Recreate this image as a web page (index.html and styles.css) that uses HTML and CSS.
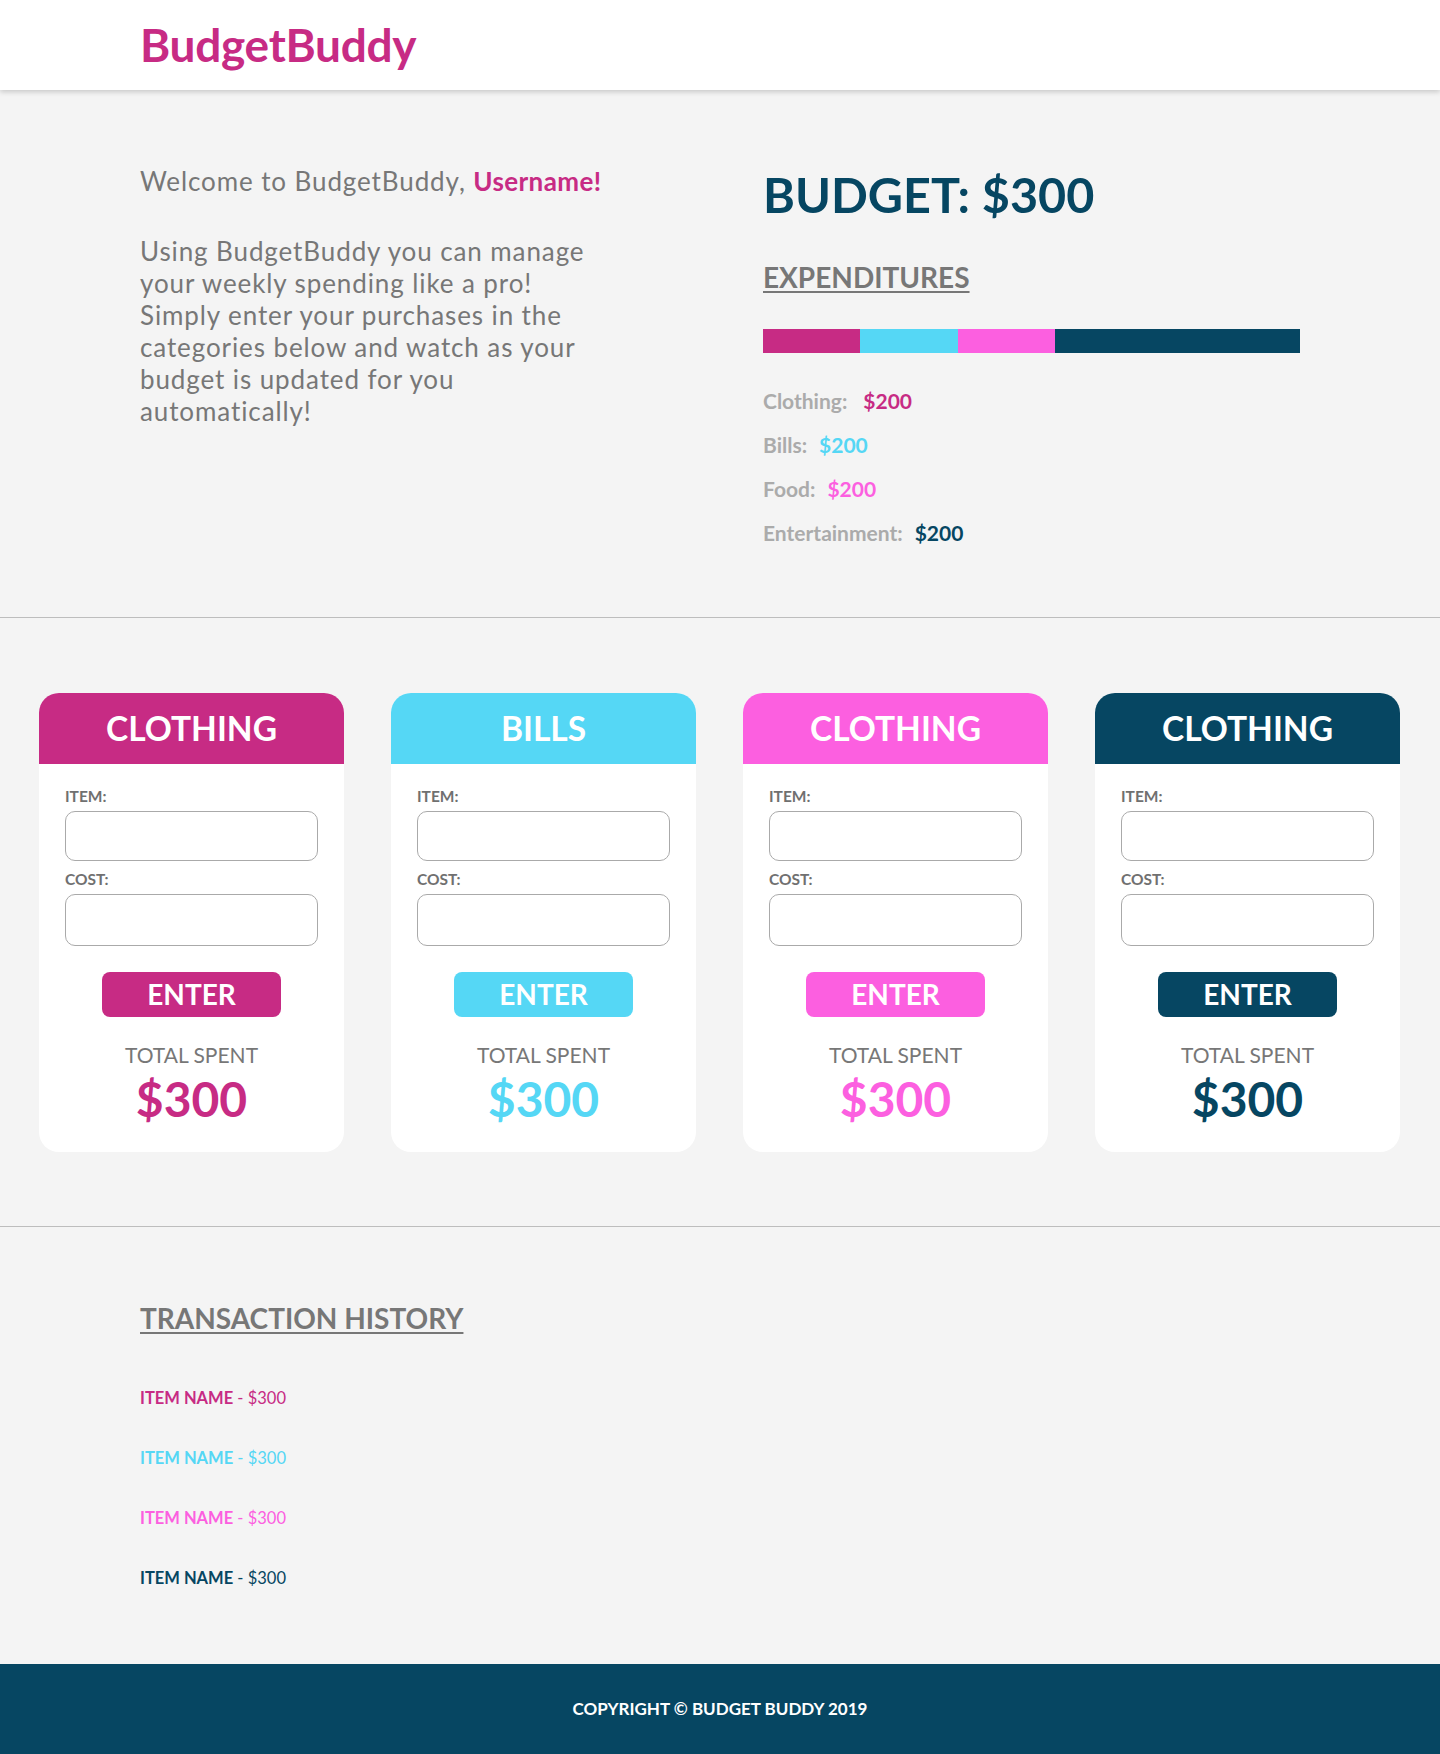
FILE: index.html
```html
<!DOCTYPE html>
<html lang="en">
<head>
<meta charset="utf-8">
<title>BudgetBuddy</title>
<link rel="stylesheet" href="styles.css">
</head>
<body>
<header class="site-header">
  <div class="logo">BudgetBuddy</div>
</header>

<section class="intro">
  <div class="intro-inner">
    <div class="intro-left">
      <p class="welcome">Welcome to BudgetBuddy, <strong class="username">Username!</strong></p>
      <p class="lead">Using BudgetBuddy you can manage your weekly spending like a pro! Simply enter your purchases in the categories below and watch as your budget is updated for you automatically!</p>
    </div>
    <div class="intro-right">
      <h1 class="budget">BUDGET: $300</h1>
      <h2 class="section-title">EXPENDITURES</h2>
      <div class="bar">
        <span class="seg c-clothing" style="width:18.15%"></span>
        <span class="seg c-bills" style="width:18.15%"></span>
        <span class="seg c-food" style="width:18.15%"></span>
        <span class="seg c-ent" style="width:45.55%"></span>
      </div>
      <ul class="legend">
        <li><span class="lg-label lg-wide">Clothing:</span><span class="lg-val t-clothing">$200</span></li>
        <li><span class="lg-label">Bills:</span><span class="lg-val t-bills">$200</span></li>
        <li><span class="lg-label">Food:</span><span class="lg-val t-food">$200</span></li>
        <li><span class="lg-label">Entertainment:</span><span class="lg-val t-ent">$200</span></li>
      </ul>
    </div>
  </div>
</section>

<section class="cards">
  <div class="card">
    <div class="card-head c-clothing">CLOTHING</div>
    <div class="card-body">
      <label class="field-label">ITEM:</label>
      <input class="field field-item" type="text">
      <label class="field-label">COST:</label>
      <input class="field field-cost" type="text">
      <button class="enter c-clothing">ENTER</button>
      <div class="total-label">TOTAL SPENT</div>
      <div class="total-val t-clothing">$300</div>
    </div>
  </div>
  <div class="card">
    <div class="card-head c-bills">BILLS</div>
    <div class="card-body">
      <label class="field-label">ITEM:</label>
      <input class="field field-item" type="text">
      <label class="field-label">COST:</label>
      <input class="field field-cost" type="text">
      <button class="enter c-bills">ENTER</button>
      <div class="total-label">TOTAL SPENT</div>
      <div class="total-val t-bills">$300</div>
    </div>
  </div>
  <div class="card">
    <div class="card-head c-food">CLOTHING</div>
    <div class="card-body">
      <label class="field-label">ITEM:</label>
      <input class="field field-item" type="text">
      <label class="field-label">COST:</label>
      <input class="field field-cost" type="text">
      <button class="enter c-food">ENTER</button>
      <div class="total-label">TOTAL SPENT</div>
      <div class="total-val t-food">$300</div>
    </div>
  </div>
  <div class="card">
    <div class="card-head c-ent">CLOTHING</div>
    <div class="card-body">
      <label class="field-label">ITEM:</label>
      <input class="field field-item" type="text">
      <label class="field-label">COST:</label>
      <input class="field field-cost" type="text">
      <button class="enter c-ent">ENTER</button>
      <div class="total-label">TOTAL SPENT</div>
      <div class="total-val t-ent">$300</div>
    </div>
  </div>
</section>

<section class="history">
  <h2 class="section-title history-title">TRANSACTION HISTORY</h2>
  <ul class="tx-list">
    <li class="t-clothing"><strong>ITEM NAME</strong> - $300</li>
    <li class="t-bills"><strong>ITEM NAME</strong> - $300</li>
    <li class="t-food"><strong>ITEM NAME</strong> - $300</li>
    <li class="t-ent"><strong>ITEM NAME</strong> - $300</li>
  </ul>
</section>

<footer class="site-footer">COPYRIGHT © BUDGET BUDDY 2019</footer>
</body>
</html>
```

FILE: styles.css
```css
* { box-sizing: border-box; }

html, body {
  margin: 0;
  padding: 0;
}

body {
  background: #f4f4f4;
  font-family: Lato, "Open Sans", "Liberation Sans", sans-serif;
  color: #777777;
}

/* colours */
.c-clothing { background: #c72b84; }
.c-bills { background: #55d7f5; }
.c-food { background: #fc5fe0; }
.c-ent { background: #064662; }
.t-clothing { color: #c72b84; }
.t-bills { color: #55d7f5; }
.t-food { color: #fc5fe0; }
.t-ent { color: #064662; }

/* header */
.site-header {
  height: 90px;
  background: #ffffff;
  box-shadow: 0 2px 5px rgba(0, 0, 0, 0.18);
  padding-left: 140px;
  position: relative;
  z-index: 1;
}

.logo {
  font-size: 46px;
  font-weight: 700;
  line-height: 90px;
  color: #c72b84;
  letter-spacing: -0.3px;
}

/* intro */
.intro {
  padding: 75px 0 72px;
  border-bottom: 1px solid #bdbdbd;
}

.intro-inner {
  width: 1160px;
  margin: 0 auto;
  display: grid;
  grid-template-columns: 480px 537px;
  justify-content: space-between;
}

.welcome {
  margin: 0;
  font-size: 26px;
  line-height: 32px;
  letter-spacing: 0.9px;
  color: #777777;
}

.username {
  color: #c72b84;
  font-weight: 700;
  letter-spacing: 0.4px;
}

.lead {
  margin: 38px 0 0;
  width: 465px;
  font-size: 26px;
  line-height: 32px;
  letter-spacing: 0.9px;
  color: #777777;
}

.budget {
  margin: 0;
  font-size: 48.5px;
  line-height: 58px;
  font-weight: 700;
  color: #064662;
}

.section-title {
  margin: 37px 0 0;
  font-size: 28px;
  line-height: 34px;
  font-weight: 700;
  color: #777777;
  text-decoration: underline;
  text-decoration-thickness: 2px;
  text-underline-offset: 3px;
}

.bar {
  margin-top: 35px;
  height: 24px;
  display: flex;
}

.seg {
  display: block;
  height: 100%;
}

.legend {
  list-style: none;
  margin: 36px 0 0;
  padding: 0;
  display: flex;
  flex-direction: column;
  gap: 20px;
}

.legend li {
  font-size: 21px;
  line-height: 24px;
  font-weight: 700;
  display: flex;
  gap: 12px;
}

.lg-label { color: #ababab; }
.lg-wide { margin-right: 4px; }

/* cards */
.cards {
  padding: 75px 40px 74px 39px;
  display: flex;
  gap: 47px;
  border-bottom: 1px solid #bdbdbd;
}

.card {
  width: 305px;
  background: #ffffff;
  border-radius: 20px;
  overflow: hidden;
}

.card-head {
  height: 71px;
  line-height: 71px;
  text-align: center;
  color: #ffffff;
  font-size: 33.5px;
  font-weight: 700;
}

.card-body {
  padding: 22px 26px 25px;
  display: flex;
  flex-direction: column;
}

.field-label {
  font-size: 15.5px;
  line-height: 20px;
  font-weight: 700;
  color: #707070;
}

.field {
  margin-top: 5px;
  width: 100%;
  border: 1px solid #aaaaaa;
  border-radius: 10px;
  background: #ffffff;
  font: inherit;
}

.field-item {
  height: 50px;
  margin-bottom: 8px;
}

.field-cost {
  height: 52px;
}

.enter {
  margin: 26px auto 0;
  width: 179px;
  height: 45px;
  border: 0;
  border-radius: 8px;
  color: #ffffff;
  font-family: Lato, "Open Sans", sans-serif;
  font-size: 28px;
  line-height: 45px;
  font-weight: 700;
  padding: 0;
}

.total-label {
  margin-top: 25px;
  text-align: center;
  font-size: 21px;
  line-height: 26px;
  color: #777777;
}

.total-val {
  margin-top: 3px;
  text-align: center;
  font-size: 48px;
  line-height: 56px;
  font-weight: 700;
}

/* history */
.history {
  padding: 73px 140px 75px;
}

.history-title {
  margin: 0;
  font-size: 28px;
  line-height: 36px;
}

.tx-list {
  list-style: none;
  margin: 51px 0 0;
  padding: 0;
  display: flex;
  flex-direction: column;
  gap: 38px;
}

.tx-list li {
  font-size: 16.5px;
  line-height: 22px;
}

.tx-list strong { font-weight: 700; }

/* footer */
.site-footer {
  height: 90px;
  background: #064662;
  color: #ffffff;
  text-align: center;
  font-size: 17px;
  font-weight: 700;
  line-height: 90px;
}
```
